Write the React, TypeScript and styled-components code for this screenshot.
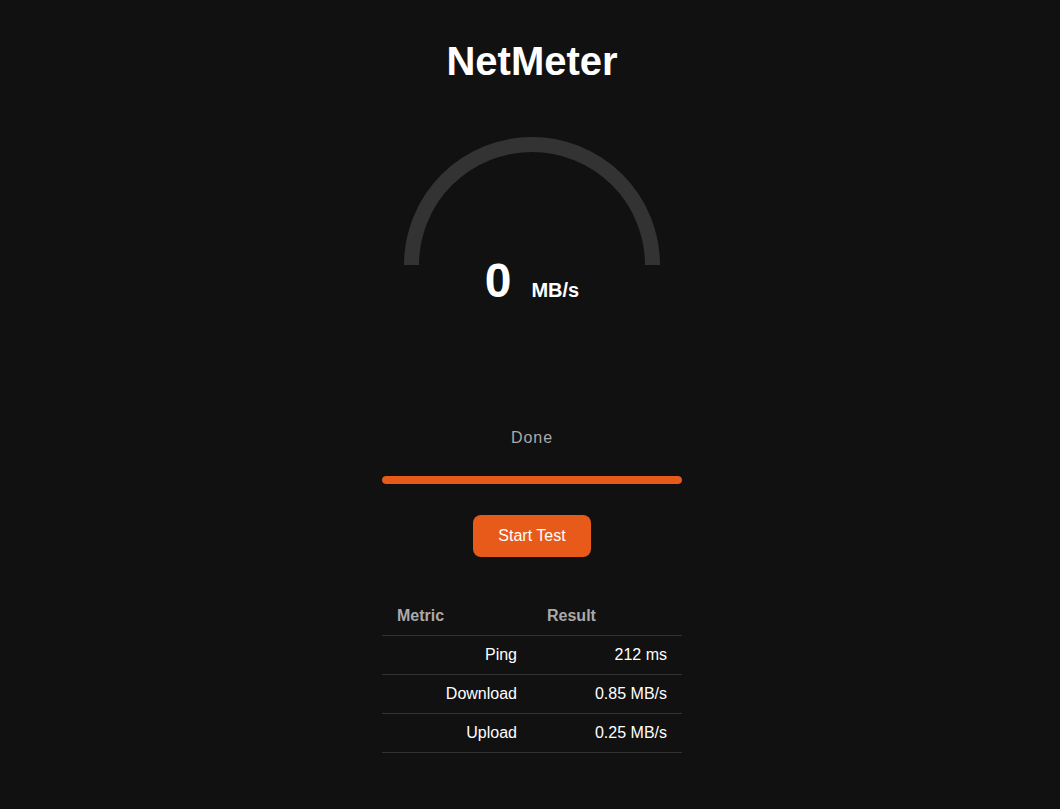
import React from 'react';
import styled, { createGlobalStyle } from 'styled-components';

const GlobalStyle = createGlobalStyle`
  html, body {
    margin: 0;
    padding: 0;
    background-color: #111111;
    color: #ffffff;
    font-family: "Liberation Sans", Arial, sans-serif;
  }
`;

const Page = styled.div`
  min-height: 809px;
  display: flex;
  flex-direction: column;
  align-items: center;
  padding-top: 38px;
  padding-left: 4px;
  box-sizing: border-box;
`;

const Title = styled.h1`
  margin: 0;
  font-size: 40px;
  font-weight: 700;
  line-height: 46px;
`;

const Gauge = styled.svg`
  display: block;
  margin-top: 53px;
`;

const Reading = styled.div`
  display: flex;
  align-items: baseline;
  gap: 20px;
  margin-top: -8px;
  line-height: 48px;
`;

const Value = styled.span`
  font-size: 48px;
  font-weight: 700;
`;

const Unit = styled.span`
  font-size: 20px;
  font-weight: 700;
`;

const Status = styled.div`
  margin-top: 115px;
  font-size: 16px;
  letter-spacing: 1px;
  color: #aaaaaa;
`;

const Track = styled.div`
  margin-top: 29px;
  width: 300px;
  height: 8px;
  border-radius: 4px;
  background-color: #333333;
  overflow: hidden;
`;

const Fill = styled.div`
  height: 100%;
  background-color: #e85a19;
  border-radius: 4px;
`;

const Button = styled.button`
  margin-top: 31px;
  width: 118px;
  height: 42px;
  border: none;
  border-radius: 8px;
  background-color: #e85a19;
  color: #ffffff;
  font-family: inherit;
  font-size: 16px;
  cursor: pointer;
`;

const Table = styled.table`
  margin-top: 40px;
  width: 300px;
  border-collapse: collapse;
  font-size: 16px;
`;

const Th = styled.th`
  text-align: left;
  padding: 10px 15px;
  color: #aaaaaa;
  font-weight: 700;
  border-bottom: 1px solid #333333;
  width: 50%;
`;

const Td = styled.td`
  text-align: right;
  padding: 10px 15px;
  color: #ffffff;
  border-bottom: 1px solid #333333;
`;

const results = [
  { metric: 'Ping', result: '212 ms' },
  { metric: 'Download', result: '0.85 MB/s' },
  { metric: 'Upload', result: '0.25 MB/s' },
];

const App: React.FC = () => {
  const progress = 100;
  return (
    <>
      <GlobalStyle />
      <Page>
        <Title>NetMeter</Title>
        <Gauge width="256" height="128" viewBox="0 0 256 128">
          <path
            d="M 7.5 128 A 120.5 120.5 0 0 1 248.5 128"
            fill="none"
            stroke="#333333"
            strokeWidth="15"
          />
        </Gauge>
        <Reading>
          <Value>0</Value>
          <Unit>MB/s</Unit>
        </Reading>
        <Status>Done</Status>
        <Track>
          <Fill style={{ width: `${progress}%` }} />
        </Track>
        <Button>Start Test</Button>
        <Table>
          <thead>
            <tr>
              <Th>Metric</Th>
              <Th>Result</Th>
            </tr>
          </thead>
          <tbody>
            {results.map((row) => (
              <tr key={row.metric}>
                <Td>{row.metric}</Td>
                <Td>{row.result}</Td>
              </tr>
            ))}
          </tbody>
        </Table>
      </Page>
    </>
  );
};

export default App;
